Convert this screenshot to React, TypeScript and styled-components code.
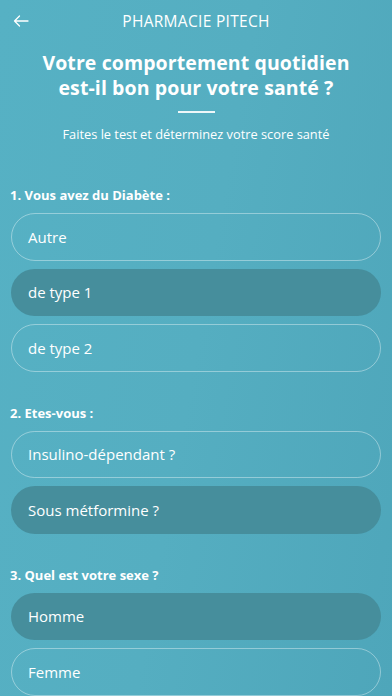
import React from "react";
import styled, { createGlobalStyle } from "styled-components";

const Global = createGlobalStyle`
  html, body { margin: 0; padding: 0; }
  body {
    width: 392px;
    height: 696px;
    overflow: hidden;
    font-family: "Open Sans", "Noto Sans", sans-serif;
    -webkit-font-smoothing: antialiased;
  }
`;

const Screen = styled.div`
  width: 392px;
  height: 696px;
  overflow: hidden;
  background: linear-gradient(100deg, #56b1c4 0%, #55aec1 50%, #4ea6ba 100%);
  color: #ffffff;
  display: flex;
  flex-direction: column;
`;

const TopBar = styled.div`
  height: 42px;
  display: grid;
  grid-template-columns: 40px 1fr 40px;
  align-items: center;
`;

const BackButton = styled.button`
  background: none;
  border: none;
  padding: 0 0 0 13px;
  display: flex;
  align-items: center;
  cursor: pointer;
`;

const TopTitle = styled.div`
  text-align: center;
  font-size: 15.5px;
  letter-spacing: 0.3px;
  font-weight: 400;
`;

const Hero = styled.div`
  display: flex;
  flex-direction: column;
  align-items: center;
  padding-top: 8px;
`;

const Heading = styled.h1`
  margin: 0;
  text-align: center;
  font-size: 19.5px;
  line-height: 25px;
  font-weight: 700;
  letter-spacing: 0.1px;
`;

const Divider = styled.div`
  width: 37px;
  height: 1.5px;
  background: rgba(255, 255, 255, 0.9);
  margin-top: 11px;
`;

const Subtitle = styled.p`
  margin: 13.5px 0 0;
  font-size: 12.8px;
  line-height: 16px;
  text-align: center;
`;

const Questions = styled.div`
  display: flex;
  flex-direction: column;
  gap: 33px;
  padding: 45px 11px 0 11px;
`;

const Question = styled.section`
  display: flex;
  flex-direction: column;
`;

const Label = styled.div`
  font-size: 13px;
  font-weight: 700;
  line-height: 16px;
  margin: 0 0 10px -1px;
`;

const Options = styled.div`
  display: flex;
  flex-direction: column;
  gap: 8px;
`;

const Option = styled.div<{ $selected?: boolean }>`
  height: 47.5px;
  box-sizing: border-box;
  border-radius: 24px;
  display: flex;
  align-items: center;
  padding-left: 16px;
  font-size: 15px;
  border: 1.5px solid
    ${(p) => (p.$selected ? "transparent" : "rgba(255, 255, 255, 0.38)")};
  background: ${(p) => (p.$selected ? "#468e9c" : "transparent")};
`;

const data = [
  {
    label: "1. Vous avez du Diabète :",
    options: [
      { t: "Autre", s: false },
      { t: "de type 1", s: true },
      { t: "de type 2", s: false },
    ],
  },
  {
    label: "2. Etes-vous :",
    options: [
      { t: "Insulino-dépendant ?", s: false },
      { t: "Sous métformine ?", s: true },
    ],
  },
  {
    label: "3. Quel est votre sexe ?",
    options: [
      { t: "Homme", s: true },
      { t: "Femme", s: false },
    ],
  },
];

export default function App() {
  return (
    <>
      <Global />
      <Screen>
        <TopBar>
          <BackButton aria-label="Retour">
            <svg width="16" height="12" viewBox="0 0 16 12" fill="none">
              <path
                d="M15 6H1.5M6.5 1L1.5 6l5 5"
                stroke="#fff"
                strokeWidth="1.3"
                strokeLinecap="round"
                strokeLinejoin="round"
              />
            </svg>
          </BackButton>
          <TopTitle>PHARMACIE PITECH</TopTitle>
          <div />
        </TopBar>
        <Hero>
          <Heading>
            Votre comportement quotidien
            <br />
            est-il bon pour votre santé ?
          </Heading>
          <Divider />
          <Subtitle>Faites le test et déterminez votre score santé</Subtitle>
        </Hero>
        <Questions>
          {data.map((q) => (
            <Question key={q.label}>
              <Label>{q.label}</Label>
              <Options>
                {q.options.map((o) => (
                  <Option key={o.t} $selected={o.s}>
                    {o.t}
                  </Option>
                ))}
              </Options>
            </Question>
          ))}
        </Questions>
      </Screen>
    </>
  );
}
